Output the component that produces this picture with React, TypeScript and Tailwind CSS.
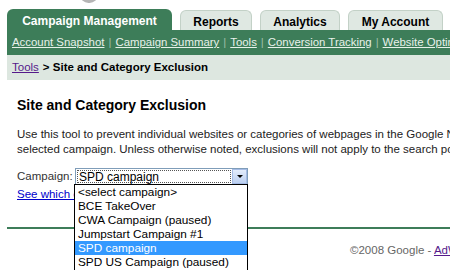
import React from "react";

const font = { fontFamily: '"Liberation Sans", Arial, sans-serif' };

export default function App() {
  const items = [
    "<select campaign>",
    "BCE TakeOver",
    "CWA Campaign (paused)",
    "Jumpstart Campaign #1",
    "SPD campaign",
    "SPD US Campaign (paused)",
  ];
  return (
    <div
      className="relative w-[450px] h-[270px] overflow-hidden bg-white text-[#222]"
      style={font}
    >
      {/* partial logo at top */}
      <div className="absolute left-[80px] top-[-14px] w-[18px] h-[17px] rounded-full border-b-[3px] border-[#b5b5b5]" />

      {/* Tabs */}
      <div className="flex items-end gap-2 pl-[7px] pt-[9px]">
        <div className="w-[165px] h-[21px] rounded-t-[6px] bg-[#3d7d59] text-white font-bold text-[12px] flex items-center justify-center pt-[3px]">
          Campaign Management
        </div>
        <div className="w-[72px] h-[20px] rounded-t-[6px] bg-[#dfe8e2] border border-b-0 border-[#c3d1c7] font-bold text-[12px] text-black flex items-center justify-center pt-[3px]">
          Reports
        </div>
        <div className="w-[80px] h-[20px] rounded-t-[6px] bg-[#dfe8e2] border border-b-0 border-[#c3d1c7] font-bold text-[12px] text-black flex items-center justify-center pt-[3px]">
          Analytics
        </div>
        <div className="w-[95px] h-[20px] rounded-t-[6px] bg-[#dfe8e2] border border-b-0 border-[#c3d1c7] font-bold text-[12px] text-black flex items-center justify-center pt-[3px]">
          My Account
        </div>
      </div>

      {/* Green links bar */}
      <div className="ml-[7px] h-[25px] bg-[#3d7d59] flex items-center pl-[5px] whitespace-nowrap text-[11.4px] text-[#e8f1ea]">
        <span className="underline">Account Snapshot</span>
        <span className="mx-[4px] text-[#9dbda8]">|</span>
        <span className="underline">Campaign Summary</span>
        <span className="mx-[4px] text-[#9dbda8]">|</span>
        <span className="underline">Tools</span>
        <span className="mx-[4px] text-[#9dbda8]">|</span>
        <span className="underline">Conversion Tracking</span>
        <span className="mx-[4px] text-[#9dbda8]">|</span>
        <span className="underline">Website Optimizer</span>
      </div>

      {/* Breadcrumb */}
      <div className="ml-[7px] h-[25px] bg-[#dde7e0] flex items-center pl-[5px] whitespace-nowrap text-[11.5px]">
        <span className="underline text-[#551a8b]">Tools</span>
        <span className="font-bold text-black ml-[4px]">&gt; Site and Category Exclusion</span>
      </div>

      {/* Content */}
      <div className="pl-[17px] whitespace-nowrap">
        <div className="mt-[16px] font-bold text-[14px] text-black leading-[18px]">
          Site and Category Exclusion
        </div>
        <div className="mt-[13px] text-[11.5px] leading-[15px] text-[#222]">
          <div>Use this tool to prevent individual websites or categories of webpages in the Google Network from</div>
          <div>selected campaign. Unless otherwise noted, exclusions will not apply to the search portion of</div>
        </div>
        <div className="mt-[11px] flex items-center h-[17px]">
          <span className="text-[11.5px] text-[#333] w-[58px]">Campaign:</span>
          <div className="w-[173px] h-[17px] border border-[#7f9db9] bg-white flex items-stretch">
            <div className="flex-1 m-[1px] border border-dotted border-[#555] flex items-center pl-[1px] text-[12px] text-black leading-none">
              SPD campaign
            </div>
            <div className="w-[15px] bg-gradient-to-b from-[#e3ecfb] to-[#bcd0f1] border border-[#a5bce6] flex items-center justify-center">
              <div className="w-0 h-0 border-l-[3px] border-r-[3px] border-t-[3px] border-l-transparent border-r-transparent border-t-black" />
            </div>
          </div>
        </div>
        <div className="mt-[2px] text-[11.5px] text-[#0000cc] underline leading-[15px]">
          See which campaigns have exclusions
        </div>
      </div>

      {/* Divider */}
      <div className="ml-[7px] mt-[25px] h-[2px] bg-[#3d7d59]" />

      {/* Footer */}
      <div className="mt-[13px] pl-[350px] whitespace-nowrap text-[11.5px] text-[#666]">
        ©2008 Google - <span className="text-[#551a8b] underline">AdWords Home</span>
      </div>

      {/* Dropdown list */}
      <div className="absolute left-[74px] top-[184px] w-[174px] h-[100px] bg-white border border-black text-[11.8px] text-black">
        {items.map((it, i) => (
          <div
            key={i}
            className={
              "h-[14px] leading-[14px] pl-[3px] whitespace-nowrap " +
              (i === 4 ? "bg-[#3399ff] text-white" : "")
            }
          >
            {it}
          </div>
        ))}
      </div>
    </div>
  );
}
